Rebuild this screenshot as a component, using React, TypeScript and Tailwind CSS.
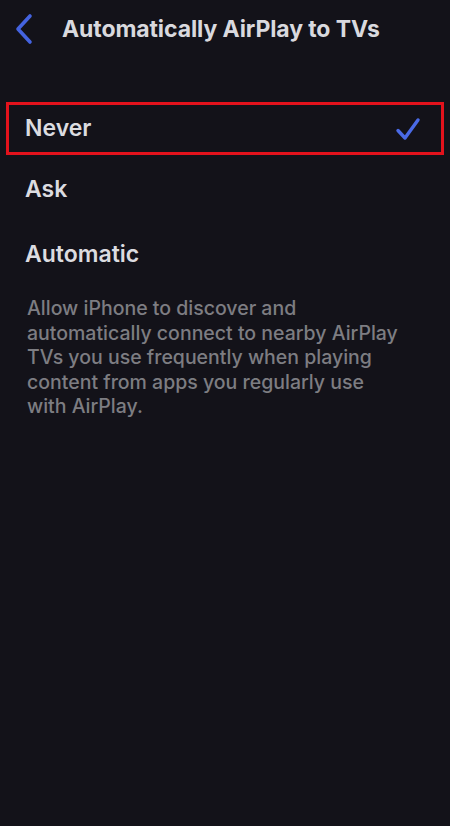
const options = ['Never', 'Ask', 'Automatic'];

const footer = [
  'Allow iPhone to discover and',
  'automatically connect to nearby AirPlay',
  'TVs you use frequently when playing',
  'content from apps you regularly use',
  'with AirPlay.',
];

export default function App() {
  const selected = 'Never';

  return (
    <div
      className="w-[450px] h-[826px] bg-[#131219] text-[#e6e6ea] overflow-hidden"
      style={{ fontFamily: 'Inter, "Noto Sans", sans-serif' }}
    >
      <header className="flex items-center h-[58px] pl-[15px]">
        <svg width="20" height="32" viewBox="0 0 20 32" fill="none">
          <path d="M15 3 L3 16 L15 29" stroke="#4463e0" strokeWidth="3.6" strokeLinecap="round" strokeLinejoin="round" />
        </svg>
        <h1 className="ml-[27px] text-[23px] font-bold tracking-[-0.1px] text-[#d9d9de]">
          Automatically AirPlay to TVs
        </h1>
      </header>

      <div className="mt-[44px]">
        {options.map((opt) => (
          <div
            key={opt}
            className={
              opt === selected
                ? 'mx-[6px] h-[53px] mb-[2px] flex items-center justify-between pl-[16px] pr-[20px] border-[3px] border-[#e3121c]'
                : 'mx-[6px] h-[65px] flex items-center pl-[19px]'
            }
          >
            <span className="text-[23px] font-semibold text-[#dcdce0]">{opt}</span>
            {opt === selected && (
              <svg width="26" height="24" viewBox="0 0 26 24" fill="none">
                <path d="M3 13.5 L10 21 L23 3" stroke="#4a6ae6" strokeWidth="3.4" strokeLinecap="round" strokeLinejoin="round" />
              </svg>
            )}
          </div>
        ))}
      </div>

      <p className="mt-[9px] pl-[27px] text-[19.5px] font-medium leading-[24.5px] text-[#7d7d82] whitespace-nowrap">
        {footer.map((line) => (
          <span key={line} className="block">{line}</span>
        ))}
      </p>
    </div>
  );
}
